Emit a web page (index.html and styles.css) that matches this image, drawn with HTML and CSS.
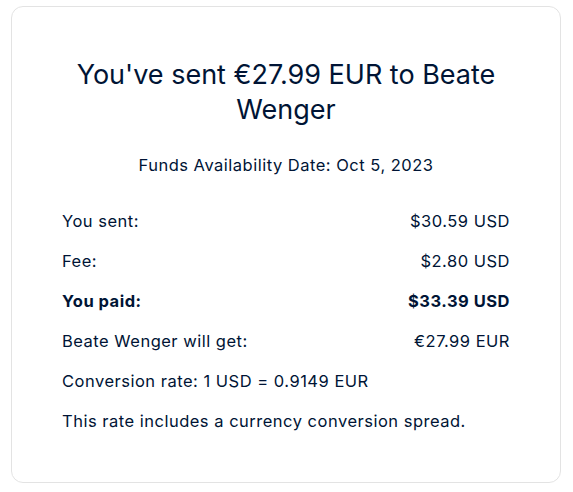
FILE: index.html
```html
<!DOCTYPE html>
<html lang="en">
<head>
<meta charset="utf-8">
<title>Transfer sent</title>
<link rel="stylesheet" href="styles.css">
</head>
<body>
<main class="card">
  <h1 class="title">You've sent €27.99 EUR to Beate Wenger</h1>
  <p class="date">Funds Availability Date: Oct 5, 2023</p>
  <div class="rows">
    <div class="row"><span>You sent:</span><span>$30.59 USD</span></div>
    <div class="row"><span>Fee:</span><span>$2.80 USD</span></div>
    <div class="row total"><span>You paid:</span><span>$33.39 USD</span></div>
    <div class="row"><span>Beate Wenger will get:</span><span>€27.99 EUR</span></div>
    <div class="row"><span>Conversion rate: 1 USD = 0.9149 EUR</span></div>
    <div class="row"><span>This rate includes a currency conversion spread.</span></div>
  </div>
</main>
</body>
</html>
```

FILE: styles.css
```css
* { box-sizing: border-box; }
html, body { background: #ffffff; }
body {
  margin: 6px 0 0 11px;
  font-family: Inter, "Noto Sans", "Liberation Sans", sans-serif;
  color: #001435;
}
.card {
  width: 550px;
  height: 477px;
  border: 1px solid #e3e3e3;
  border-radius: 12px;
  padding: 50px 50px;
  display: flex;
  flex-direction: column;
}
.title {
  margin: 0;
  font-size: 27px;
  font-weight: 400;
  line-height: 35px;
  text-align: center;
}
.date {
  margin: 26px 0 0;
  font-size: 16.5px;
  letter-spacing: 0.5px;
  line-height: 24px;
  text-align: center;
}
.rows {
  margin-top: 32px;
  display: flex;
  flex-direction: column;
  gap: 16px;
}
.row {
  display: flex;
  justify-content: space-between;
  font-size: 16.5px;
  letter-spacing: 0.5px;
  line-height: 24px;
}
.total { font-weight: 700; }
```
